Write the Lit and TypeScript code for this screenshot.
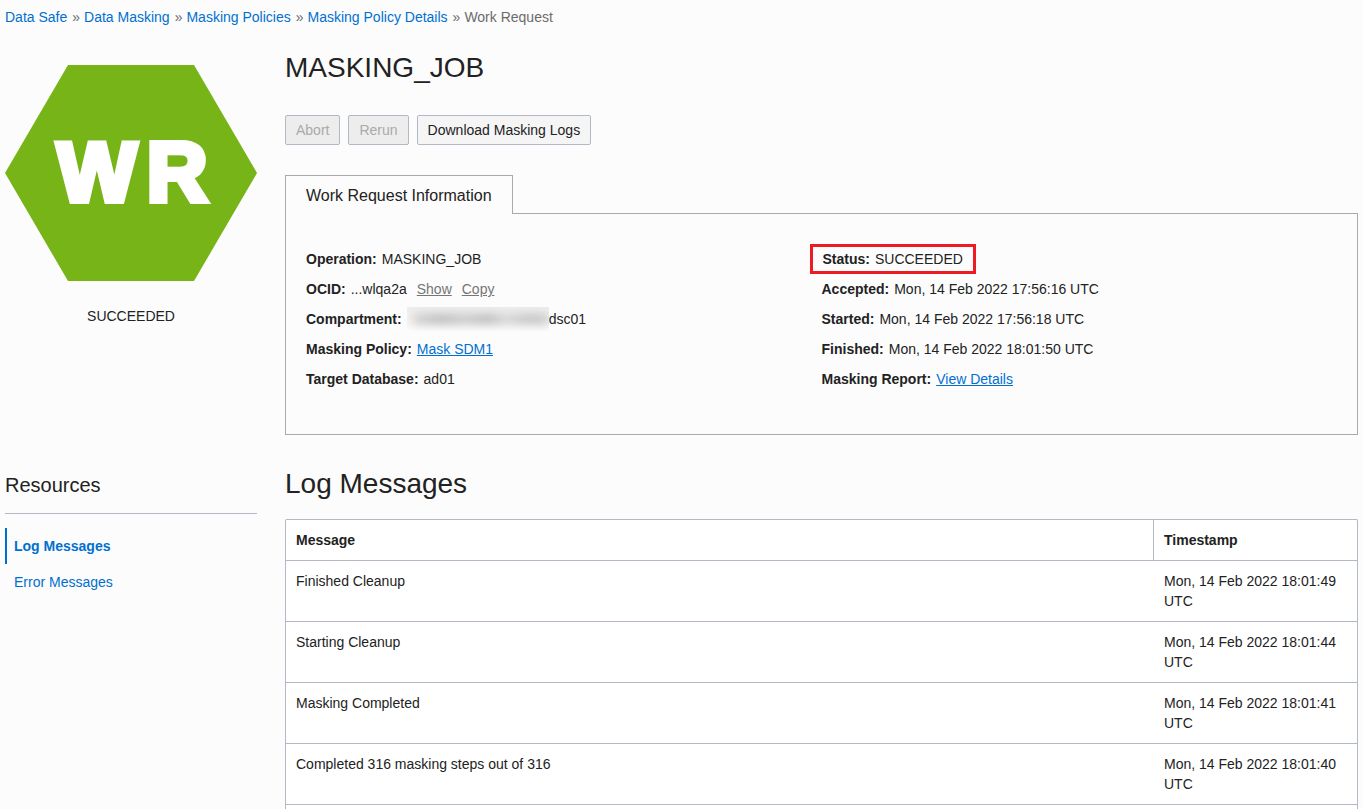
import { LitElement, html, css, nothing } from "lit";
import { customElement, property, state } from "lit/decorators.js";
import { classMap } from "lit/directives/class-map.js";

const base = css`
  * {
    box-sizing: border-box;
  }
  a {
    color: #0070d0;
    text-decoration: none;
  }
  h1,
  h2,
  h3 {
    margin: 0;
    font-weight: 400;
  }
`;

@customElement("bread-crumbs")
class BreadCrumbs extends LitElement {
  @property({ attribute: false }) links: string[] = [];
  @property() current = "";

  static styles = [
    base,
    css`
      :host {
        display: block;
        padding: 7px 5px;
        color: #6b6b6b;
      }
      .trail {
        display: flex;
        flex-wrap: wrap;
        column-gap: 4px;
      }
      .step {
        display: flex;
        gap: 5px;
      }
    `,
  ];

  render() {
    return html`<nav class="trail" aria-label="Breadcrumb">
      ${this.links.map((label) => html`<span class="step"><a href="#">${label}</a><span>»</span></span>`)}
      <span aria-current="page">${this.current}</span>
    </nav>`;
  }
}

@customElement("status-badge")
class StatusBadge extends LitElement {
  @property() code = "";
  @property() status = "";

  static styles = [
    base,
    css`
      :host {
        display: block;
        text-align: center;
      }
      .hexagon {
        display: block;
        width: 100%;
      }
      .shape {
        fill: #77b417;
      }
      .code {
        fill: #fff;
        stroke: #fff;
        stroke-width: 6px;
        font: 700 84px "Liberation Sans", Arial, sans-serif;
        text-anchor: middle;
      }
      .status {
        margin-top: 25px;
      }
    `,
  ];

  render() {
    return html`
      <svg class="hexagon" viewBox="0 0 252 216" role="img" aria-label="Work request">
        <polygon class="shape" points="0,108 63,0 189,0 252,108 189,216 63,216"></polygon>
        <text class="code" y="136"><tspan x="92">W</tspan><tspan x="172">R</tspan></text>
      </svg>
      <div class="status">${this.status}</div>
    `;
  }
}

@customElement("request-info")
class RequestInfo extends LitElement {
  static styles = [
    base,
    css`
      :host {
        display: block;
      }
      .tabs {
        display: flex;
      }
      .tab {
        height: 39px;
        padding: 2px 20px 0;
        border: 1px solid #aaa;
        border-bottom: 0;
        background: none;
        color: #222;
        font: 16px/36px "Liberation Sans", Arial, sans-serif;
      }
      .rest {
        flex: 1;
        border-bottom: 1px solid #aaa;
      }
      .panel {
        display: grid;
        grid-template-columns: 1fr 1fr;
        padding: 30px 20px 40px;
        border: 1px solid #aaa;
        border-top: 0;
      }
      .facts {
        margin: 0;
      }
      .fact {
        display: flex;
        align-items: center;
        gap: 5px;
        height: 30px;
      }
      dt {
        font-weight: 700;
      }
      dd {
        display: flex;
        align-items: center;
        margin: 0;
      }
      dd a {
        text-decoration: underline;
      }
      .marked {
        width: max-content;
        margin-left: -12px;
        padding: 0 10px;
        border: 3px solid #ed1c24;
      }
      .action {
        margin-left: 10px;
        padding: 0;
        border: 0;
        background: none;
        color: #767676;
        font: inherit;
        text-decoration: underline;
      }
      .redacted {
        width: 142px;
        height: 24px;
        overflow: hidden;
        background: linear-gradient(#eee, #f6f6f6 70%, #fcfcfc);
      }
      .smudge {
        display: block;
        height: 10px;
        margin: 7px 0 0 6px;
        background: linear-gradient(90deg, #d0d0d0, #b8b8b8 20%, #c8c8c8 38%, #b8b8b8 55%, #d4d4d4 68%, #c0c0c0 85%, #c8c8c8);
        filter: blur(5px);
      }
    `,
  ];

  render() {
    return html`
      <div class="tabs" role="tablist">
        <button class="tab" role="tab" aria-selected="true">Work Request Information</button>
        <div class="rest"></div>
      </div>
      <div class="panel" role="tabpanel">
        <dl class="facts">
          <div class="fact"><dt>Operation:</dt><dd>MASKING_JOB</dd></div>
          <div class="fact">
            <dt>OCID:</dt>
            <dd>
              ...wlqa2a<button class="action">Show</button><button class="action">Copy</button>
            </dd>
          </div>
          <div class="fact">
            <dt>Compartment:</dt>
            <dd><span class="redacted"><span class="smudge"></span></span>dsc01</dd>
          </div>
          <div class="fact"><dt>Masking Policy:</dt><dd><a href="#">Mask SDM1</a></dd></div>
          <div class="fact"><dt>Target Database:</dt><dd>ad01</dd></div>
        </dl>
        <dl class="facts">
          <div class="fact marked"><dt>Status:</dt><dd>SUCCEEDED</dd></div>
          <div class="fact"><dt>Accepted:</dt><dd>Mon, 14 Feb 2022 17:56:16 UTC</dd></div>
          <div class="fact"><dt>Started:</dt><dd>Mon, 14 Feb 2022 17:56:18 UTC</dd></div>
          <div class="fact"><dt>Finished:</dt><dd>Mon, 14 Feb 2022 18:01:50 UTC</dd></div>
          <div class="fact"><dt>Masking Report:</dt><dd><a href="#">View Details</a></dd></div>
        </dl>
      </div>
    `;
  }
}

@customElement("resource-nav")
class ResourceNav extends LitElement {
  @state() private selected = "Log Messages";

  static styles = [
    base,
    css`
      :host {
        display: block;
      }
      .heading {
        padding: 5px 0 14px;
        border-bottom: 1px solid #b3b9c4;
        font-size: 20px;
        line-height: 28px;
      }
      .items {
        margin: 14px 0 0;
        padding: 0;
        list-style: none;
      }
      .link {
        display: block;
        padding: 8px 7px;
        border-left: 2px solid transparent;
      }
      .current {
        border-color: #0070d0;
        font-weight: 700;
      }
    `,
  ];

  render() {
    return html`
      <h3 class="heading">Resources</h3>
      <ul class="items">
        ${["Log Messages", "Error Messages"].map(
          (name) => html`<li>
            <a
              href="#"
              class=${classMap({ link: true, current: name === this.selected })}
              aria-current=${name === this.selected ? "page" : nothing}
              @click=${(e: Event) => {
                e.preventDefault();
                this.selected = name;
              }}
              >${name}</a
            >
          </li>`
        )}
      </ul>
    `;
  }
}

interface LogEntry {
  message: string;
  time: string;
}

@customElement("log-table")
class LogTable extends LitElement {
  @property({ attribute: false }) entries: LogEntry[] = [];

  static styles = [
    base,
    css`
      :host {
        display: block;
        border: 1px solid #b3b9c4;
        border-bottom: 0;
        border-radius: 2px 2px 0 0;
        background: #fff;
      }
      .log {
        width: 100%;
        table-layout: fixed;
        border-collapse: separate;
        border-spacing: 0;
      }
      th,
      td {
        padding: 10px;
        border-bottom: 1px solid #b3b9c4;
        text-align: left;
        vertical-align: top;
      }
      .time {
        width: 204px;
        padding-left: 11px;
      }
      th.time {
        padding-left: 10px;
        border-left: 1px solid #b3b9c4;
      }
    `,
  ];

  render() {
    return html`<table class="log">
      <thead>
        <tr>
          <th scope="col">Message</th>
          <th scope="col" class="time">Timestamp</th>
        </tr>
      </thead>
      <tbody>
        ${this.entries.map((e) => html`<tr><td>${e.message}</td><td class="time">${e.time}</td></tr>`)}
      </tbody>
    </table>`;
  }
}

@customElement("app-root")
class AppRoot extends LitElement {
  static styles = [
    base,
    css`
      :host {
        display: flex;
        flex-direction: column;
        min-height: 100vh;
        background: #fcfcfc;
        color: #222;
        font: 14px/20px "Liberation Sans", Arial, sans-serif;
      }
      .page {
        flex: 1;
        display: grid;
        grid-template-columns: 252px minmax(0, 1fr);
        grid-template-rows: auto 1fr;
        column-gap: 28px;
        row-gap: 31px;
        padding: 0 5px;
      }
      .badge {
        margin-top: 31px;
      }
      .title {
        font-size: 28px;
        line-height: 36px;
      }
      .detail .title {
        margin-top: 16px;
      }
      .buttons {
        display: flex;
        gap: 8px;
        margin: 29px 0 30px;
      }
      .button {
        height: 30px;
        padding: 0 10px;
        border: 1px solid #b3b9c4;
        border-radius: 2px;
        background: #f5f5f5;
        color: #222;
        font: inherit;
      }
      .button:disabled {
        background: #ededed;
        color: #aaa;
      }
      .logs {
        display: flex;
        flex-direction: column;
        gap: 17px;
      }
      .table {
        flex: 1;
      }
    `,
  ];

  private crumbs = ["Data Safe", "Data Masking", "Masking Policies", "Masking Policy Details"];

  private entries: LogEntry[] = [
    { message: "Finished Cleanup", time: "Mon, 14 Feb 2022 18:01:49 UTC" },
    { message: "Starting Cleanup", time: "Mon, 14 Feb 2022 18:01:44 UTC" },
    { message: "Masking Completed", time: "Mon, 14 Feb 2022 18:01:41 UTC" },
    { message: "Completed 316 masking steps out of 316", time: "Mon, 14 Feb 2022 18:01:40 UTC" },
  ];

  render() {
    return html`
      <bread-crumbs .links=${this.crumbs} current="Work Request"></bread-crumbs>
      <div class="page">
        <status-badge class="badge" code="WR" status="SUCCEEDED"></status-badge>
        <main class="detail">
          <h1 class="title">MASKING_JOB</h1>
          <div class="buttons">
            <button class="button" disabled>Abort</button>
            <button class="button" disabled>Rerun</button>
            <button class="button">Download Masking Logs</button>
          </div>
          <request-info></request-info>
        </main>
        <resource-nav></resource-nav>
        <section class="logs">
          <h2 class="title">Log Messages</h2>
          <log-table class="table" .entries=${this.entries}></log-table>
        </section>
      </div>
    `;
  }
}
